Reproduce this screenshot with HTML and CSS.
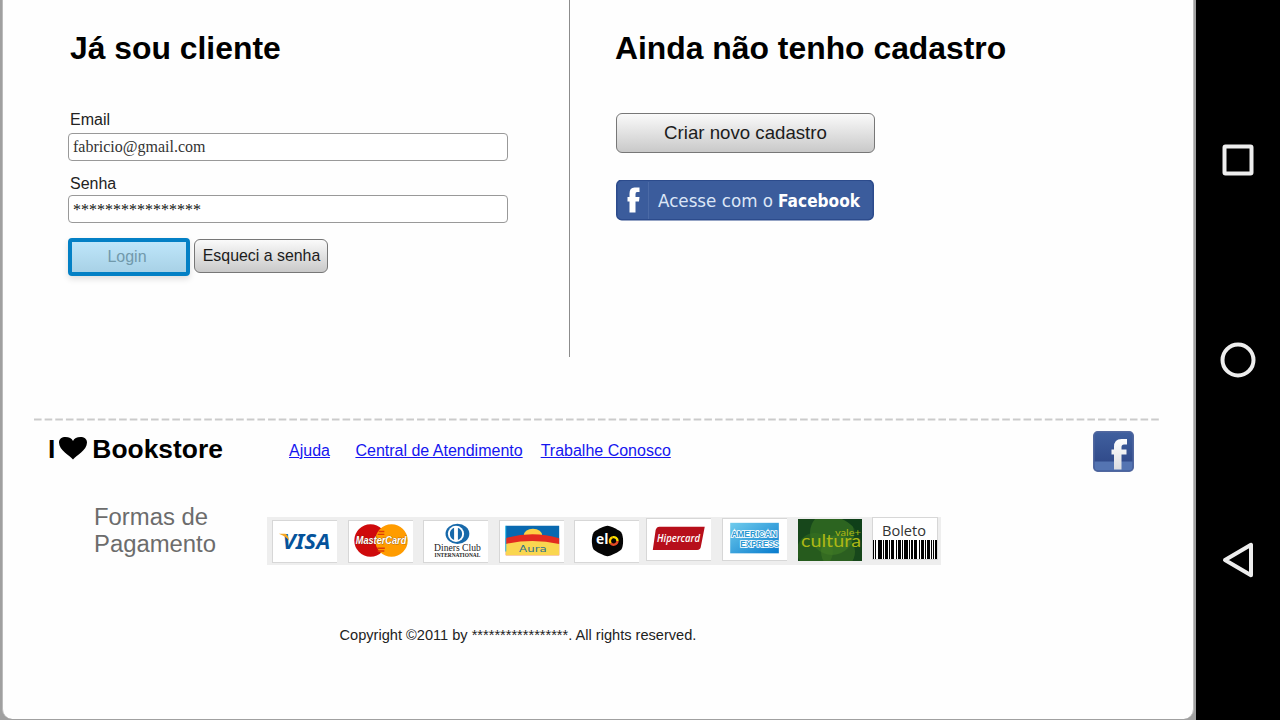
FILE: index.html
```html
<!DOCTYPE html>
<html lang="pt-BR">
<head>
<meta charset="utf-8">
<title>I Love Bookstore</title>
<link rel="stylesheet" href="styles.css">
</head>
<body>
<div class="screen">
  <main class="page">
    <div class="access">
      <section class="client">
        <h1 class="title">Já sou cliente</h1>
        <form class="form">
          <label class="label" for="email">Email</label>
          <input class="field" id="email" type="text" value="fabricio@gmail.com">
          <label class="label label-second" for="senha">Senha</label>
          <input class="field field-secret" id="senha" type="text" value="****************">
          <div class="actions">
            <button class="button login" type="button">Login</button>
            <button class="button forgot" type="button">Esqueci a senha</button>
          </div>
        </form>
      </section>
      <section class="signup">
        <h1 class="title">Ainda não tenho cadastro</h1>
        <button class="button create" type="button">Criar novo cadastro</button>
        <button class="facebook" type="button">
          <svg width="258" height="41" viewBox="0 0 258 41">
            <rect x=".75" y=".25" width="256.5" height="39.5" rx="5" fill="#3b5c9c" stroke="#2c4b8c" stroke-width="1.5"/>
            <path d="M32.500 2v37" stroke="#4b6aa6"/>
            <path d="M13.500 32.500V21.500H11.500V17H13.500V13.500Q13.500 7.500 18.500 7.500H23.500V12H21Q19.500 12 19.500 14V17H23.500L23 21.500H19.500V32.500Z" fill="#fff"/>
            <text class="fb-text" x="42" y="26.800" textLength="115" lengthAdjust="spacingAndGlyphs">Acesse com o</text>
            <text class="fb-text fb-bold" x="162" y="26.800" textLength="82" lengthAdjust="spacingAndGlyphs">Facebook</text>
          </svg>
        </button>
      </section>
    </div>
    <footer class="footer">
      <svg class="rule" width="1128" height="3"><path d="M0 1.500H1127" stroke="#cbcbcb" stroke-width="2.200" stroke-dasharray="7.600 3.040"/></svg>
      <div class="footer-top">
        <div class="brand">
          <span>I</span>
          <svg class="heart" width="30" height="24" viewBox="0 0 30 24"><path d="M15 23.500C12 19.500 1 14.500 1 6.500C1 2.800 4 1 7.500 1C11 1 14 2.500 15 5C16 2.500 19 1 22.500 1C26 1 29 2.800 29 6.500C29 14.500 18 19.500 15 23.500Z"/></svg>
          <span>Bookstore</span>
        </div>
        <nav class="links">
          <a href="#">Ajuda</a>
          <a href="#">Central de Atendimento</a>
          <a href="#">Trabalhe Conosco</a>
        </nav>
        <svg class="fb-icon" width="41" height="41" viewBox="0 0 41 41">
          <defs>
            <linearGradient id="fbBlue" x2="0" y2="1"><stop stop-color="#40609f"/><stop offset="1" stop-color="#2c4484"/></linearGradient>
            <linearGradient id="fbWhite" x2="0" y2="1"><stop stop-color="#fff"/><stop offset="1" stop-color="#dcdde0"/></linearGradient>
          </defs>
          <rect x=".75" y=".75" width="39.500" height="39.500" rx="4" fill="url(#fbBlue)" stroke="#52689f" stroke-width="1.500"/>
          <path d="M1.500 30.500H39.500V36Q39.500 39.500 36 39.500H5Q1.500 39.500 1.500 36Z" fill="#5474b2"/>
          <path d="M21 38.500V23.500H18.500V18.500H21V16Q21 8 28.500 8H34V13.500H31Q28.500 13.500 28.500 16V18.500H33.500V23.500H28.500V38.500Z" fill="url(#fbWhite)"/>
        </svg>
      </div>
      <div class="payment">
        <h2 class="payment-title">Formas de<br>Pagamento</h2>
        <div class="cards">
          <svg class="card" width="65" height="43" viewBox="0 0 65 43">
            <text x="9" y="29.500" class="visa" textLength="50" lengthAdjust="spacingAndGlyphs">VISA</text>
            <path d="M5 13.500H12Q14.500 14 16 21Q13 16.500 5 13.500Z" fill="#f5a623"/>
          </svg>
          <svg class="card master" width="65" height="43" viewBox="0 0 65 43">
            <circle cx="21.500" cy="20.500" r="17" fill="#cf0a0c"/><circle cx="43.500" cy="20.500" r="17" fill="#ff9c00"/>
            <path d="M30 11h6M29 14h7M28.500 28.500h8M29 31.500h7" stroke="#dc3b08" stroke-width="1.500"/>
            <text x="6" y="24.500" class="master-text" textLength="53" lengthAdjust="spacingAndGlyphs">MasterCard</text>
          </svg>
          <svg class="card diners" width="65" height="43" viewBox="0 0 65 43">
            <ellipse cx="34" cy="13.500" rx="12.500" ry="10.500" fill="#1769aa"/><circle cx="32.500" cy="13.500" r="8.500" fill="#fff"/>
            <path d="M30.500 7A7 7 0 0 0 30.500 20ZM34.500 7A7 7 0 0 1 34.500 20Z" fill="#1769aa"/>
            <text x="9.500" y="31.500" class="serif" font-size="10.500" textLength="49" lengthAdjust="spacingAndGlyphs">Diners Club</text>
            <text x="10" y="38" class="serif heavy" font-size="6" textLength="48" lengthAdjust="spacingAndGlyphs">INTERNATIONAL</text>
          </svg>
          <svg class="card aura" width="65" height="43" viewBox="0 0 65 43">
            <path d="M5 5H61V24H5Z" fill="#0969b0"/><ellipse cx="33.500" cy="16" rx="10" ry="8" fill="#ffcf45"/>
            <path d="M5 18Q33 10 61 18V36H5Z" fill="#e32b20"/><path d="M5 24Q33 18 61 24V36H5Z" fill="#fad650"/>
            <path d="M5 5V32" stroke="#19b5e8"/>
            <text x="19" y="32" class="aura-text" textLength="29" lengthAdjust="spacingAndGlyphs">Aura</text>
          </svg>
          <svg class="card elo" width="65" height="43" viewBox="0 0 65 43">
            <path d="M33 5C36 5 46 10 47.500 12C50 16 50 26 47.500 30C46 32 36 37 33 37C30 37 20 32 18.500 30C16 26 16 16 18.500 12C20 10 30 5 33 5Z" fill="#050505"/>
            <text x="21" y="24.500" class="elo-text" textLength="13" lengthAdjust="spacingAndGlyphs">el</text>
            <g fill="none" stroke-width="2.500"><path d="M36.500 23.500A4 4 0 0 1 38.500 17" stroke="#ffcb00"/><path d="M38.500 17A4 4 0 0 1 43.500 21" stroke="#ffe100"/><path d="M43.500 21A4 4 0 0 1 36.500 23.500" stroke="#e64924"/></g>
          </svg>
          <svg class="card hiper" width="65" height="43" viewBox="0 0 65 43">
            <path d="M12 8H59.500L55.500 28.500Q55 32.500 51.500 32.500H5L8 11.500Q9 8 12 8Z" fill="#b70f1b"/>
            <text x="9.500" y="24" class="hiper-text" textLength="45" lengthAdjust="spacingAndGlyphs">Hipercard</text>
          </svg>
          <svg class="card amex" width="65" height="43" viewBox="0 0 65 43">
            <defs><linearGradient id="amex" x1="0" x2="1" y2="1"><stop stop-color="#70cced"/><stop offset="1" stop-color="#087bcd"/></linearGradient></defs>
            <rect x="6.500" y="4" width="51" height="32" fill="url(#amex)"/>
            <text x="7.500" y="18.500" class="amex-text" textLength="48" lengthAdjust="spacingAndGlyphs">AMERICAN</text>
            <text x="17" y="29" class="amex-text" textLength="41" lengthAdjust="spacingAndGlyphs">EXPRESS</text>
          </svg>
          <svg class="card cultura" width="64" height="42" viewBox="0 0 64 42">
            <rect width="65" height="43" fill="#17471b"/><circle cx="34" cy="14" r="22" fill="#2c6420"/><circle cx="17" cy="32" r="18" fill="#3a7421" opacity=".45"/><circle cx="40" cy="33" r="17" fill="#4b8527" opacity=".4"/><path d="M44 0Q65 10 65 35V0Z" fill="#0f4019"/>
            <text x="37" y="17" class="vale" font-size="9" textLength="26" lengthAdjust="spacingAndGlyphs">vale+</text>
            <text x="3" y="28" class="vale" font-size="17" textLength="60" lengthAdjust="spacingAndGlyphs">cultura</text>
          </svg>
          <svg class="card boleto" width="66" height="43" viewBox="0 0 64 41">
            <text x="9" y="17.500" class="boleto-text" textLength="44" lengthAdjust="spacingAndGlyphs">Boleto</text>
            <path d="M0 22h1v19h-1zM2 22h1v19h-1zM5 22h4v19h-4zM10 22h1v19h-1zM12 22h3v19h-3zM16 22h1v19h-1zM18 22h3v19h-3zM23 22h1v19h-1zM25 22h3v19h-3zM29 22h1v19h-1zM31 22h4v19h-4zM36 22h1v19h-1zM38 22h2v19h-2zM41 22h3v19h-3zM46 22h1v19h-1zM48 22h3v19h-3zM52 22h1v19h-1zM54 22h3v19h-3zM58 22h1v19h-1zM60 22h1v19h-1zM62 22h2v19h-2z"/>
          </svg>
        </div>
      </div>
      <p class="copyright">Copyright ©2011 by *****************. All rights reserved.</p>
    </footer>
  </main>
</div>
<aside class="android">
  <svg width="36" height="36" viewBox="0 0 36 36"><rect x="4.500" y="4.500" width="27" height="27" rx="1"/></svg>
  <svg width="36" height="36" viewBox="0 0 36 36"><circle cx="18" cy="18" r="15.500"/></svg>
  <svg width="36" height="36" viewBox="0 0 36 36"><path d="M31 2.800V33.200L5 18Z"/></svg>
</aside>
</body>
</html>
```
FILE: styles.css
```css
* { box-sizing: border-box; }
body { margin: 0; width: 1280px; height: 720px; display: flex; overflow: hidden; background: #000; font-family: "Liberation Sans", Arial, sans-serif; }
.screen { width: 1196px; height: 720px; padding: 0 2px 1px 2px; background: #a0a0a0; }
.page { height: 719px; background: #fefefe; border: solid #bcbcbc; border-width: 0 1px 0 1px; border-radius: 0 0 10px 10px; }
.access { display: flex; height: 357px; }
.client { width: 567px; padding: 30px 0 0 65px; border-right: 1px solid #8c8c8c; }
.signup { padding: 30px 0 0 46px; display: flex; flex-direction: column; align-items: flex-start; }
.title { margin: 0; font-size: 31.870px; line-height: 37px; font-weight: bold; color: #000; white-space: nowrap; }
.client .title { padding-left: 2px; }
.signup .title { margin-left: -1px; }
.form { display: flex; flex-direction: column; margin: 44px 0 0; }
.label { font-size: 16px; line-height: 18px; height: 22px; padding-left: 2px; color: #222; }
.label-second { margin-top: 14px; height: 20px; line-height: 17px; }
.field { width: 440px; height: 28px; padding: 0 4px 1px; border: 1px solid #999; border-radius: 4px; background: #fff; color: #333; font: 16px "Liberation Serif", serif; }
.field-secret { padding: 2px 4px 0; color: #111; }
.actions { display: flex; gap: 4px; margin-top: 15px; align-items: flex-start; }
.button { border: 1.500px solid #777; border-radius: 6px; background: linear-gradient(#fafafa, #c9c9c9); color: #1c1c1c; font-family: inherit; padding: 0; white-space: nowrap; }
.login { width: 122px; height: 38px; font-size: 16px; color: #7199ab; border: 4px solid #0380c5; border-radius: 4px; background: linear-gradient(#bee6fa, #a8d1e6) padding-box; padding: 0 4px 1px 0; box-shadow: 0 3px 6px rgba(0,0,0,.13); }
.forgot { width: 134px; height: 34px; margin-top: 1px; font-size: 15.900px; padding-left: 1px; }
.create { width: 259px; height: 40px; margin-top: 46px; font-size: 18.670px; }
.facebook { width: 258px; height: 41px; margin-top: 27px; padding: 0; border: 0; background: none; }
.facebook svg, .card, .rule, .heart, .fb-icon { display: block; }
.fb-text { fill: #dce6f7; font: 18px "DejaVu Sans", sans-serif; }
.fb-bold { fill: #fff; font-weight: bold; }
.footer { padding-top: 61px; }
.rule { margin-left: 31px; }
.footer-top { display: flex; height: 58px; padding-left: 45px; }
.brand { display: flex; width: 241px; padding-top: 12px; font-size: 26.400px; line-height: 32px; font-weight: bold; color: #000; }
.heart { margin: 3px 4px 0 3px; }
.links { display: flex; width: 804px; padding-top: 21px; font-size: 16px; line-height: 18px; white-space: nowrap; }
.links a { color: #1515ef; text-decoration: underline; }
.links a:nth-child(2) { margin-left: 25.500px; }
.links a:nth-child(3) { margin-left: 18px; }
.fb-icon { margin-top: 10px; }
.payment { display: flex; padding: 25px 0 0 91px; height: 100px; }
.payment-title { width: 173px; margin: 0; font-size: 23.850px; line-height: 26.500px; font-weight: normal; color: #6c6c6c; }
.cards { display: flex; align-items: flex-start; width: 674px; height: 48px; margin-top: 13px; padding: 3px 5px; background: #eee; }
.card { flex: none; background: #fff; border: solid #d7d7d7; border-width: 1px 0 1px 1px; overflow: hidden; }
.master, .diners, .aura, .elo { margin-left: 10.600px; }
.hiper { margin: -2px 0 0 7.100px; }
.amex { margin: -2px 0 0 10.600px; }
.cultura { margin: -1px 0 0 11px; border: 0; }
.boleto { margin: -3px 0 0 9.500px; border-width: 1px; }
.visa { fill: #05539b; font: italic bold 22px "Noto Sans", sans-serif; }
.master-text { fill: #fff; stroke: #59320f; stroke-width: .5px; paint-order: stroke; font: italic bold 12px "Liberation Sans", sans-serif; }
.serif { fill: #222; font-family: "Liberation Serif", serif; }
.heavy { font-weight: bold; }
.aura-text { fill: #30728a; font: 8.500px "DejaVu Sans", sans-serif; }
.elo-text { fill: #fff; font: bold 14px "Open Sans", sans-serif; }
.hiper-text { fill: #fff; font: italic 600 11px "Open Sans", sans-serif; }
.amex-text { fill: #2998d3; stroke: #fff; stroke-width: 1.800px; paint-order: stroke; font: bold 9px "Liberation Sans", sans-serif; }
.vale { fill: #acb715; font-family: Lato, sans-serif; }
.boleto-text { fill: #333; font: 15px "Open Sans", sans-serif; }
.copyright { margin: 48px 0 0 336.500px; font-size: 14.600px; line-height: 17px; color: #222; white-space: nowrap; }
.android { width: 84px; height: 720px; padding-top: 142px; display: flex; flex-direction: column; align-items: center; gap: 164px; background: #000; }
.android svg { flex: none; fill: none; stroke: #eee; stroke-width: 4px; stroke-linejoin: round; }
```
